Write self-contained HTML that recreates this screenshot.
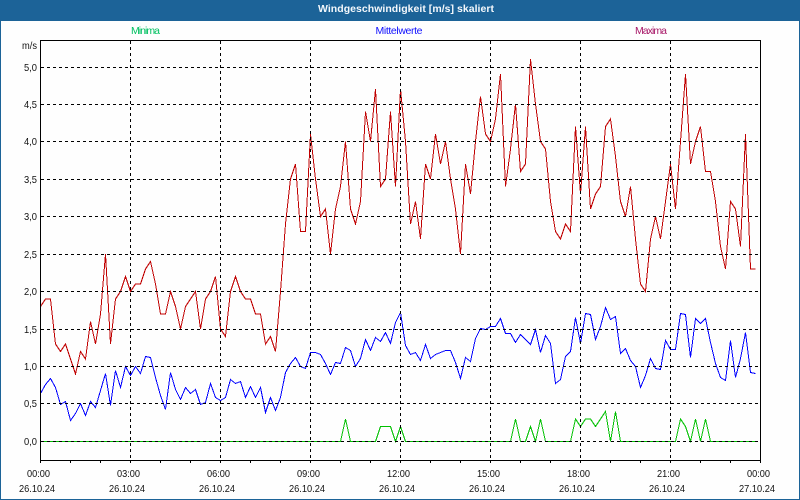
<!DOCTYPE html>
<html>
<head>
<meta charset="utf-8">
<style>
html,body{margin:0;padding:0;width:800px;height:500px;overflow:hidden;background:#fff}
svg{display:block}
text{font-family:"Liberation Sans",sans-serif;font-size:10.5px}
.y{text-anchor:end;fill:#111}
.x{text-anchor:middle;fill:#111}
</style>
</head>
<body>
<svg width="800" height="500" viewBox="0 0 800 500" xmlns="http://www.w3.org/2000/svg">
<rect x="0" y="0" width="800" height="500" fill="#1c6398"/>
<rect x="1" y="21" width="798" height="478" fill="#fefefe"/>
<text x="406" y="12" text-anchor="middle" fill="#f4f8fc" style="font-weight:bold;font-size:10.5px" textLength="176" lengthAdjust="spacing">Windgeschwindigkeit [m/s] skaliert</text>
<text x="145.5" y="34" text-anchor="middle" fill="#00c060" textLength="29">Minima</text>
<text x="399" y="34" text-anchor="middle" fill="#1010ff" textLength="47">Mittelwerte</text>
<text x="651" y="34" text-anchor="middle" fill="#a81868" textLength="32">Maxima</text>
<g fill="none" stroke-width="1" shape-rendering="crispEdges" transform="translate(0.5,441.5)">
<polyline stroke="#00c000" vector-effect="non-scaling-stroke" transform="scale(1,-7.5)" points="40,0 340,0 345,3 350,0 375,0 380,2 385,2 390,2 395,0 400,2 405,0 510,0 515,3 520,0 525,0 530,2 535,0 540,3 545,0 570,0 575,3 580,2 585,3 590,3 595,2 600,3 605,4 610,0 615,4 620,0 675,0 680,3 685,2 690,0 695,3 700,0 705,3 710,0 755,0"/>
<polyline stroke="#c00000" vector-effect="non-scaling-stroke" transform="scale(1,-7.5)" points="40,18 45,19 50,19 55,13 60,12 65,13 70,11 75,9 80,12 85,11 90,16 95,13 100,17 105,25 110,13 115,19 120,20 125,22 130,20 135,21 140,21 145,23 150,24 155,21 160,17 165,17 170,20 175,18 180,15 185,18 190,19 195,20 200,15 205,19 210,20 215,22 220,15 225,14 230,20 235,22 240,20 245,19 250,19 255,17 260,17 265,13 270,14 275,12 280,20 285,29 290,35 295,37 300,28 305,28 310,41 315,35 320,30 325,31 330,25 335,31 340,34 345,40 350,31 355,29 360,32 365,44 370,40 375,47 380,34 385,35 390,44 395,34 400,47 405,40 410,29 415,32 420,27 425,37 430,35 435,41 440,37 445,40 450,35 455,31 460,25 465,37 470,33 475,40 480,46 485,41 490,40 495,43 500,49 505,34 510,39 515,45 520,36 525,37 530,51 535,45 540,40 545,39 550,32 555,28 560,27 565,29 570,28 575,42 580,33 585,42 590,31 595,33 600,34 605,42 610,43 615,38 620,32 625,30 630,34 635,27 640,21 645,20 650,27 655,30 660,27 665,32 670,37 675,31 680,40 685,49 690,37 695,40 700,42 705,36 710,36 715,32 720,26 725,23 730,32 735,31 740,26 745,41 750,23 755,23"/>
</g>
<polyline fill="none" stroke="#0000ff" stroke-width="1" shape-rendering="crispEdges" transform="translate(0.5,0.5)" points="40,393 45,384 50,378 55,387 60,404 65,401 70,420 75,413 80,403 85,415 90,401 95,407 100,390 105,373 110,405 115,370 120,387 125,366 130,375 135,366 140,373 145,356 150,357 155,377 160,395 165,409 170,372 175,389 180,399 185,387 190,393 195,389 200,404 205,402 210,383 215,397 220,400 225,397 230,379 235,383 240,381 245,397 250,386 255,397 260,387 265,412 270,397 275,410 280,397 285,372 290,363 295,357 300,366 305,368 310,352 315,352 320,354 325,363 330,374 335,362 340,363 345,347 350,350 355,366 360,358 365,339 370,350 375,337 380,341 385,332 390,343 395,322 400,312 405,345 410,354 415,352 420,360 425,344 430,358 435,354 440,352 445,350 450,350 455,362 460,378 465,357 470,361 475,338 480,328 485,329 490,326 495,326 500,318 505,333 510,333 515,342 520,334 525,339 530,344 535,329 540,352 545,335 550,343 555,383 560,379 565,356 570,351 575,317 580,343 585,313 590,314 595,339 600,326 605,307 610,319 615,316 620,353 625,348 630,360 635,366 640,387 645,375 650,358 655,368 660,369 665,340 670,349 675,349 680,313 685,314 690,357 695,318 700,323 705,318 710,342 715,363 720,377 725,380 730,340 735,377 740,358 745,332 750,372 755,373"/>
<g stroke="#000" stroke-width="1" stroke-dasharray="3 3" shape-rendering="crispEdges" fill="none">
<path d="M41 67.5H760M41 104.5H760M41 141.5H760M41 179.5H760M41 216.5H760M41 254.5H760M41 291.5H760M41 329.5H760M41 366.5H760M41 403.5H760M41 441.5H760"/>
<path d="M130.5 41V460M220.5 41V460M310.5 41V460M400.5 41V460M490.5 41V460M580.5 41V460M670.5 41V460"/>
</g>
<g stroke="#000" stroke-width="1" fill="none" shape-rendering="crispEdges">
<path d="M40.5 40.5H760.5V460.5H40.5Z"/>
<path d="M40.5 460V463M70.5 460V463M100.5 460V463M130.5 460V463M160.5 460V463M190.5 460V463M220.5 460V463M250.5 460V463M280.5 460V463M310.5 460V463M340.5 460V463M370.5 460V463M400.5 460V463M430.5 460V463M460.5 460V463M490.5 460V463M520.5 460V463M550.5 460V463M580.5 460V463M610.5 460V463M640.5 460V463M670.5 460V463M700.5 460V463M730.5 460V463M760.5 460V463"/>
</g>
<g lengthAdjust="spacingAndGlyphs">
<text class="y" x="37" y="49" textLength="15" lengthAdjust="spacingAndGlyphs">m/s</text>
<text class="y" x="37" y="71" textLength="13" lengthAdjust="spacingAndGlyphs">5,0</text>
<text class="y" x="37" y="108" textLength="13" lengthAdjust="spacingAndGlyphs">4,5</text>
<text class="y" x="37" y="145" textLength="13" lengthAdjust="spacingAndGlyphs">4,0</text>
<text class="y" x="37" y="183" textLength="13" lengthAdjust="spacingAndGlyphs">3,5</text>
<text class="y" x="37" y="220" textLength="13" lengthAdjust="spacingAndGlyphs">3,0</text>
<text class="y" x="37" y="258" textLength="13" lengthAdjust="spacingAndGlyphs">2,5</text>
<text class="y" x="37" y="295" textLength="13" lengthAdjust="spacingAndGlyphs">2,0</text>
<text class="y" x="37" y="333" textLength="13" lengthAdjust="spacingAndGlyphs">1,5</text>
<text class="y" x="37" y="370" textLength="13" lengthAdjust="spacingAndGlyphs">1,0</text>
<text class="y" x="37" y="407" textLength="13" lengthAdjust="spacingAndGlyphs">0,5</text>
<text class="y" x="37" y="445" textLength="13" lengthAdjust="spacingAndGlyphs">0,0</text>
<text class="x" x="38.5" y="477" textLength="23" lengthAdjust="spacingAndGlyphs">00:00</text><text class="x" x="37" y="492" textLength="36" lengthAdjust="spacingAndGlyphs">26.10.24</text>
<text class="x" x="128.5" y="477" textLength="23" lengthAdjust="spacingAndGlyphs">03:00</text><text class="x" x="127" y="492" textLength="36" lengthAdjust="spacingAndGlyphs">26.10.24</text>
<text class="x" x="218.5" y="477" textLength="23" lengthAdjust="spacingAndGlyphs">06:00</text><text class="x" x="217" y="492" textLength="36" lengthAdjust="spacingAndGlyphs">26.10.24</text>
<text class="x" x="308.5" y="477" textLength="23" lengthAdjust="spacingAndGlyphs">09:00</text><text class="x" x="307" y="492" textLength="36" lengthAdjust="spacingAndGlyphs">26.10.24</text>
<text class="x" x="398.5" y="477" textLength="23" lengthAdjust="spacingAndGlyphs">12:00</text><text class="x" x="397" y="492" textLength="36" lengthAdjust="spacingAndGlyphs">26.10.24</text>
<text class="x" x="488.5" y="477" textLength="23" lengthAdjust="spacingAndGlyphs">15:00</text><text class="x" x="487" y="492" textLength="36" lengthAdjust="spacingAndGlyphs">26.10.24</text>
<text class="x" x="578.5" y="477" textLength="23" lengthAdjust="spacingAndGlyphs">18:00</text><text class="x" x="577" y="492" textLength="36" lengthAdjust="spacingAndGlyphs">26.10.24</text>
<text class="x" x="668.5" y="477" textLength="23" lengthAdjust="spacingAndGlyphs">21:00</text><text class="x" x="667" y="492" textLength="36" lengthAdjust="spacingAndGlyphs">26.10.24</text>
<text class="x" x="758.5" y="477" textLength="23" lengthAdjust="spacingAndGlyphs">00:00</text><text class="x" x="757" y="492" textLength="36" lengthAdjust="spacingAndGlyphs">27.10.24</text>
</g>
</svg>
</body>
</html>
